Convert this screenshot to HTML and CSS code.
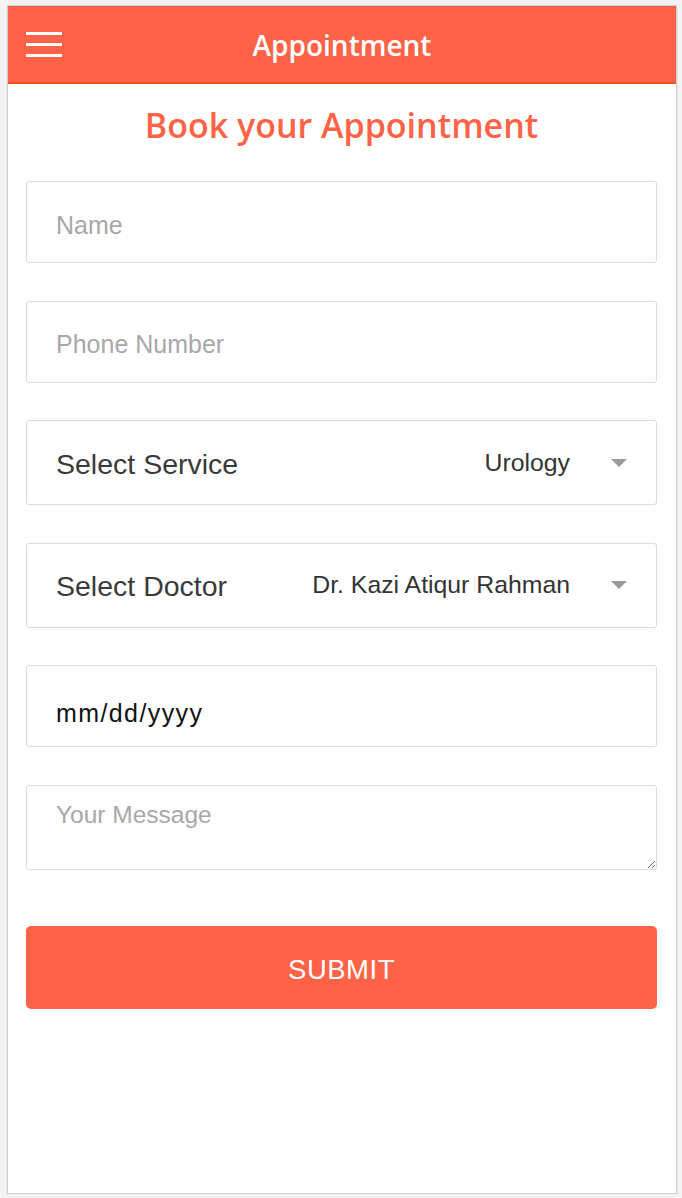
FILE: index.html
```html
<!DOCTYPE html>
<html>
<head>
<meta charset="utf-8">
<title>Appointment</title>
<link rel="stylesheet" href="styles.css">
</head>
<body>
<div class="phone">
  <header class="topbar">
    <button class="menu" aria-label="Menu">
      <span></span><span></span><span></span>
    </button>
    <h1 class="topbar-title">Appointment</h1>
  </header>
  <main class="content">
    <h2 class="heading">Book your Appointment</h2>
    <form class="form">
      <input class="field" type="text" placeholder="Name">
      <input class="field" type="text" placeholder="Phone Number">
      <div class="field select">
        <span class="select-label">Select Service</span>
        <span class="select-value">Urology</span>
        <span class="caret"></span>
      </div>
      <div class="field select">
        <span class="select-label">Select Doctor</span>
        <span class="select-value">Dr. Kazi Atiqur Rahman</span>
        <span class="caret"></span>
      </div>
      <input class="field date" type="text" value="mm/dd/yyyy">
      <textarea class="field message" placeholder="Your Message"></textarea>
      <button class="submit" type="button">SUBMIT</button>
    </form>
  </main>
</div>
</body>
</html>
```

FILE: styles.css
```css
* { box-sizing: border-box; }

html, body {
  margin: 0;
  padding: 0;
  background: #f3f3f3;
}

body {
  padding: 5px 5px 0 7px;
  font-family: "Liberation Sans", Arial, sans-serif;
}

.phone {
  width: 670px;
  height: 1189px;
  background: #fff;
  border: 1px solid #cfcfcf;
  box-shadow: 0 1px 2px rgba(0,0,0,0.12);
  display: flex;
  flex-direction: column;
}

.topbar {
  height: 78px;
  background: #ff6347;
  border-bottom: 2px solid #f4511e;
  display: flex;
  align-items: center;
  justify-content: center;
  position: relative;
}

.menu {
  position: absolute;
  left: 18px;
  top: 26px;
  width: 36px;
  height: 25px;
  padding: 0;
  border: 0;
  background: transparent;
  display: flex;
  flex-direction: column;
  justify-content: space-between;
}

.menu span {
  display: block;
  height: 3px;
  width: 36px;
  background: #fff;
}

.topbar-title {
  margin: 0;
  padding-top: 2px;
  color: #fff;
  font-family: "Open Sans", "Liberation Sans", sans-serif;
  font-weight: 600;
  font-size: 28px;
}

.content {
  padding: 21px 19px 0 18px;
}

.heading {
  margin: 0 0 36px;
  text-align: center;
  color: #ff6347;
  font-family: "Open Sans", "Liberation Sans", sans-serif;
  font-weight: 600;
  font-size: 34px;
  line-height: 40px;
}

.form {
  display: flex;
  flex-direction: column;
  gap: 37.6px;
}

.field {
  display: block;
  width: 100%;
  height: 82px;
  border: 1px solid #dcdcdc;
  border-radius: 3px;
  background: #fff;
  padding: 6px 29px 0;
  font-family: "Liberation Sans", Arial, sans-serif;
  font-size: 25px;
  color: #333;
  outline: none;
  margin: 0;
}

.field::placeholder {
  color: #a8a8a8;
}

.select {
  height: 85px;
  display: flex;
  align-items: center;
  padding: 0 29px;
}

.select-label {
  font-size: 28.5px;
  color: #3a3a3a;
  flex: 1;
  padding-top: 3px;
}

.select-value {
  font-size: 24.8px;
  color: #333;
}

.caret {
  width: 0;
  height: 0;
  margin-left: 41px;
  border-left: 8px solid transparent;
  border-right: 8px solid transparent;
  border-top: 8px solid #999;
}

.date {
  color: #111;
  letter-spacing: 1.4px;
  padding-top: 14px;
}

.message {
  height: 85px;
  padding: 15px 29px 0;
  font-size: 24.5px;
  resize: vertical;
}

.submit {
  margin-top: 18px;
  height: 83px;
  width: 100%;
  border: 0;
  border-radius: 5px;
  background: #ff6347;
  color: #fff;
  font-family: "Liberation Sans", Arial, sans-serif;
  font-size: 27.5px;
  letter-spacing: 0.5px;
  padding-top: 6px;
}
```
